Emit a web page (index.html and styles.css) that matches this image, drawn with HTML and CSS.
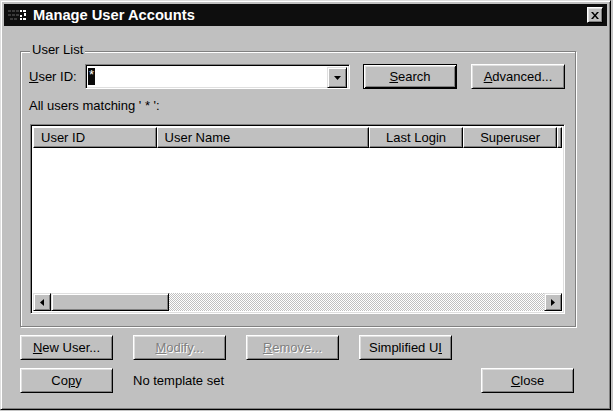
FILE: index.html
```html
<!DOCTYPE html>
<html lang="en">
<head>
    <meta charset="UTF-8">
    <title>Manage User Accounts</title>
    <link rel="stylesheet" href="styles.css">
</head>
<body>
    <div class="window">
        <div class="titlebar">
            <svg class="app-icon" width="20" height="12" viewBox="0 0 20 12">
                <rect x="0" y="1" width="3" height="2" fill="#3a3a3a"/>
                <rect x="4" y="1" width="3" height="2" fill="#3a3a3a"/>
                <rect x="8" y="1" width="3" height="2" fill="#3a3a3a"/>
                <rect x="0" y="5" width="3" height="2" fill="#3a3a3a"/>
                <rect x="4" y="5" width="3" height="2" fill="#3a3a3a"/>
                <rect x="8" y="5" width="3" height="2" fill="#3a3a3a"/>
                <rect x="2" y="9" width="3" height="2" fill="#3a3a3a"/>
                <rect x="6" y="9" width="3" height="2" fill="#3a3a3a"/>
                <rect x="12" y="1" width="2" height="2" fill="#fff"/>
                <rect x="15" y="1" width="3" height="2" fill="#fff"/>
                <rect x="16" y="4" width="2" height="3" fill="#fff"/>
                <rect x="12" y="6" width="2" height="2" fill="#fff"/>
                <rect x="12" y="9" width="2" height="2" fill="#fff"/>
                <rect x="15" y="9" width="3" height="2" fill="#fff"/>
            </svg>
            <span class="title">Manage User Accounts</span>
            <button class="close-btn">
                <svg width="8" height="7" viewBox="0 0 8 7">
                    <path d="M0 0h2l2 2.5L6 0h2L5 3.5 8 7H6L4 4.5 2 7H0l3-3.5z" fill="#000"/>
                </svg>
            </button>
        </div>

        <div class="content">
            <fieldset class="group">
                <legend>User List</legend>

                <div class="search-row">
                    <label class="field-label"><u>U</u>ser ID:</label>
                    <div class="combo">
                        <div class="combo-text"><span class="sel">*</span></div>
                        <div class="combo-btn">
                            <svg width="7" height="4" viewBox="0 0 7 4"><path d="M0 0h7L3.5 4z" fill="#000"/></svg>
                        </div>
                    </div>
                    <button class="btn default search"><u>S</u>earch</button>
                    <button class="btn advanced"><u>A</u>dvanced...</button>
                </div>

                <div class="match-text">All users matching ' * ':</div>

                <div class="listview">
                    <div class="list-header">
                        <div class="col col-id">User ID</div>
                        <div class="col col-name">User Name</div>
                        <div class="col col-login center">Last Login</div>
                        <div class="col col-super center">Superuser</div>
                        <div class="col col-rest"></div>
                    </div>
                    <div class="list-body"></div>
                    <div class="hscroll">
                        <div class="scroll-btn">
                            <svg width="4" height="7" viewBox="0 0 4 7"><path d="M4 0v7L0 3.5z" fill="#000"/></svg>
                        </div>
                        <div class="scroll-thumb"></div>
                        <div class="scroll-track"></div>
                        <div class="scroll-btn">
                            <svg width="4" height="7" viewBox="0 0 4 7"><path d="M0 0v7L4 3.5z" fill="#000"/></svg>
                        </div>
                    </div>
                </div>
            </fieldset>

            <div class="actions">
                <button class="btn"><u>N</u>ew User...</button>
                <button class="btn disabled"><u>M</u>odify...</button>
                <button class="btn disabled"><u>R</u>emove...</button>
                <button class="btn">Simplified U<u>I</u></button>
            </div>

            <div class="actions">
                <button class="btn">Co<u>p</u>y</button>
                <span class="template-text">No template set</span>
                <button class="btn close"><u>C</u>lose</button>
            </div>
        </div>
    </div>
</body>
</html>
```

FILE: styles.css
```css
* {
    box-sizing: border-box;
}

body {
    margin: 0;
    background-color: #c4c4c4;
    font-family: "Liberation Sans", Arial, sans-serif;
    font-size: 13px;
    color: #000;
}

.window {
    width: 611px;
    height: 410px;
    background-color: #c0c0c0;
    border: 1px solid;
    border-color: #dfdfdf #000 #000 #dfdfdf;
    box-shadow: inset 1px 1px #fff, inset -1px -1px #808080;
    padding: 3px;
    display: flex;
    flex-direction: column;
}

/* barra de titulo */
.titlebar {
    height: 22px;
    background-color: #0e0e0e;
    color: #fff;
    display: flex;
    align-items: center;
    padding: 0 4px;
}

.app-icon {
    flex: none;
    margin-right: 5px;
}

.title {
    font-weight: bold;
    font-size: 14.7px;
}

.close-btn {
    margin-left: auto;
    width: 16px;
    height: 16px;
    padding: 0;
    background-color: #c0c0c0;
    border: 1px solid;
    border-color: #fff #000 #000 #fff;
    box-shadow: inset 1px 1px #dfdfdf, inset -1px -1px #808080;
    display: flex;
    align-items: center;
    justify-content: center;
}

.content {
    padding: 0 30px 0 16px;
}

/* grupo */
.group {
    width: 556px;
    margin: 16px 0 0 0;
    padding: 3px 10px 12px 8px;
    border: 1px solid #808080;
    box-shadow: inset 1px 1px #fff, 1px 1px #fff;
}

.group legend {
    padding: 0 2px 4px 2px;
    margin-left: 1px;
    line-height: 15px;
    background-color: #c0c0c0;
}

.search-row {
    display: flex;
    align-items: center;
    height: 25px;
}

.field-label {
    width: 56px;
}

.combo {
    width: 265px;
    height: 25px;
    background-color: #fff;
    border: 1px solid;
    border-color: #808080 #fff #fff #808080;
    box-shadow: inset 1px 1px #000, inset -1px -1px #dfdfdf;
    padding: 2px 2px 2px 2px;
    display: flex;
}

.combo-text {
    flex: 1;
}

.sel {
    display: inline-block;
    background-color: #0a0a0a;
    color: #fff;
    height: 17px;
    line-height: 14px;
    padding: 0 1px;
}

.combo-btn {
    width: 20px;
    height: 21px;
    background-color: #c0c0c0;
    border: 1px solid;
    border-color: #dfdfdf #000 #000 #dfdfdf;
    box-shadow: inset 1px 1px #fff, inset -1px -1px #808080;
    display: flex;
    align-items: center;
    justify-content: center;
}

/* botones */
.btn {
    width: 93px;
    height: 25px;
    padding: 0;
    font: inherit;
    color: #000;
    background-color: #c0c0c0;
    border: 1px solid;
    border-color: #fff #000 #000 #fff;
    box-shadow: inset 1px 1px #dfdfdf, inset -1px -1px #808080;
}

.btn.default {
    border-color: #000;
    box-shadow: inset 1px 1px #fff, inset -1px -1px #000, inset 2px 2px #dfdfdf, inset -2px -2px #808080;
}

.search {
    width: 94px;
    margin-left: 13px;
}

.advanced {
    width: 94px;
    margin-left: 14px;
}

.btn.disabled {
    color: #808080;
    text-shadow: 1px 1px #fff;
}

.match-text {
    margin-top: 9px;
    line-height: 15px;
}

/* lista */
.listview {
    margin: 11px 0 0 1px;
    width: 535px;
    height: 190px;
    background-color: #fff;
    border: 1px solid;
    border-color: #808080 #fff #fff #808080;
    box-shadow: inset 1px 1px #000, inset -1px -1px #dfdfdf;
    padding: 2px;
    display: flex;
    flex-direction: column;
}

.list-header {
    display: flex;
    height: 21px;
    flex: none;
}

.col {
    height: 21px;
    line-height: 19px;
    padding-left: 7px;
    background-color: #c0c0c0;
    border: 1px solid;
    border-color: #fff #000 #000 #fff;
    box-shadow: inset -1px -1px #808080;
    white-space: nowrap;
}

.col.center {
    padding-left: 0;
    text-align: center;
}

.col-id { width: 124px; }
.col-name { width: 213px; }
.col-login { width: 95px; }
.col-super { width: 94px; }
.col-rest { width: 5px; padding: 0; }

.list-body {
    flex: 1;
}

.hscroll {
    display: flex;
    height: 18px;
    flex: none;
}

.scroll-btn,
.scroll-thumb {
    background-color: #c0c0c0;
    border: 1px solid;
    border-color: #dfdfdf #000 #000 #dfdfdf;
    box-shadow: inset 1px 1px #fff, inset -1px -1px #808080;
}

.scroll-btn {
    width: 18px;
    display: flex;
    align-items: center;
    justify-content: center;
}

.scroll-thumb {
    width: 118px;
}

.scroll-track {
    flex: 1;
    background: repeating-conic-gradient(#fff 0 25%, #c0c0c0 0 50%) 0 0 / 2px 2px;
}

/* botones de abajo */
.actions {
    display: flex;
    align-items: center;
    gap: 20px;
    margin-top: 8px;
}

.actions + .actions {
    margin-top: 8px;
}

.close {
    margin-left: auto;
    margin-right: 3px;
}
```
